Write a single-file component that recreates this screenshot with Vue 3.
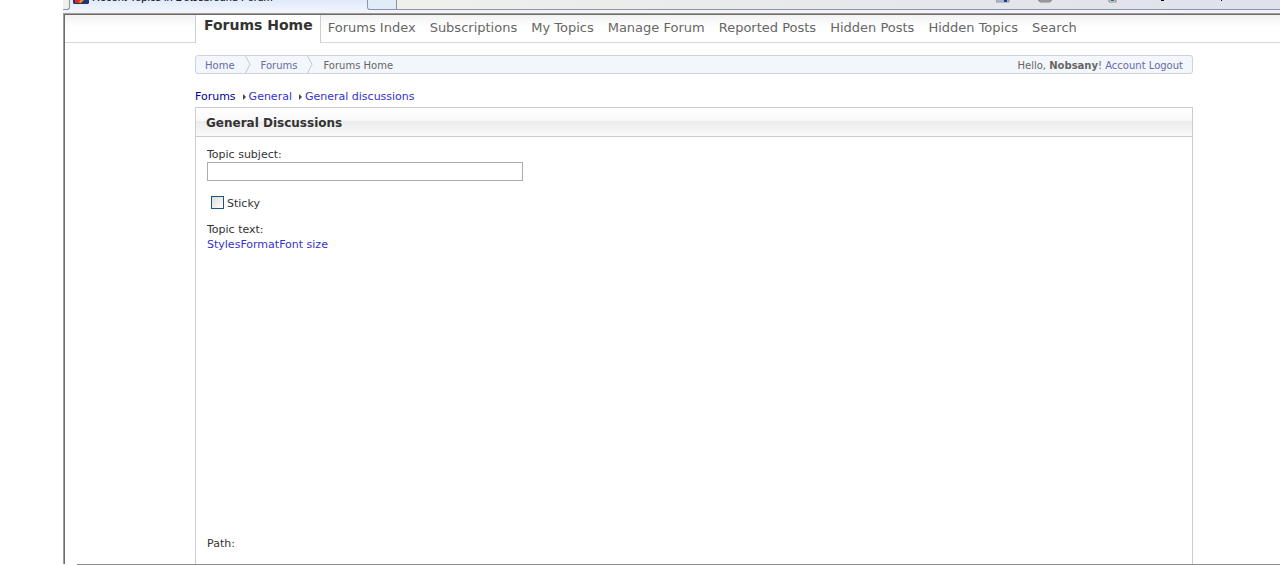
<template>
  <div class="window">
    <header class="browser-bar">
      <div class="tab-edge"></div>
      <div class="tab">
        <svg class="favicon" width="16" height="4" viewBox="0 0 16 4">
          <path d="M0 0h16v3l-1 1H1L0 3z" fill="#1d3570" />
          <path d="M2 0h7L6 3H2z" fill="#e8261c" />
          <path d="M7 0h4L8 3H6z" fill="#f08a24" />
        </svg>
        <span class="tab-title">Recent Topics in DotJsbround Forum</span>
      </div>
      <div class="new-tab"></div>
      <div class="toolbar">
        <svg width="240" height="4" viewBox="0 0 240 4">
          <path d="M0 0h13v2H0z" fill="#c7d3e6" stroke="#8592a8" />
          <path d="M8 0h3v2H8z" fill="#143c90" />
          <path d="M42 0h14l-2 2H44z" fill="#aaa" stroke="#888" />
          <path d="M113 0h7v2h-7z" fill="#fff" stroke="#888" />
          <path d="M115 0h3v1h-3z" fill="#18707a" />
          <path d="M165 0h3v1h-3zM225 0h1v1h-1z" fill="#000" />
        </svg>
      </div>
    </header>

    <div class="frame">
      <main class="page">
        <nav class="main-nav">
          <a
            v-for="item in navItems"
            :key="item"
            href="#"
            class="nav-link"
            :class="{ active: item === current }"
            @click.prevent="current = item"
            >{{ item }}</a
          >
        </nav>

        <div class="content">
          <div class="breadcrumb">
            <div class="crumbs">
              <template v-for="crumb in crumbs" :key="crumb">
                <a href="#" class="crumb">{{ crumb }}</a>
                <svg class="chevron" width="6" height="17" viewBox="0 0 6 17">
                  <path d="M0.5 0L5 8.5L0.5 17" fill="none" stroke="#c3cad0" />
                </svg>
              </template>
              <span class="crumb">Forums Home</span>
            </div>
            <div class="user">
              Hello, <b>Nobsany</b>! <a href="#">Account</a> <a href="#">Logout</a>
            </div>
          </div>

          <div class="forum-path">
            <a href="#" class="root">Forums</a>
            <svg class="arrow" width="3" height="6" viewBox="0 0 3 6"><path d="M0 0l3 3l-3 3z" /></svg>
            <a href="#">General</a>
            <svg class="arrow" width="3" height="6" viewBox="0 0 3 6"><path d="M0 0l3 3l-3 3z" /></svg>
            <a href="#">General discussions</a>
          </div>

          <section class="panel">
            <h2>General Discussions</h2>
            <form class="topic-form" @submit.prevent>
              <label for="subject" class="subject-label">Topic subject:</label>
              <input id="subject" v-model="subject" type="text" class="subject" />
              <div class="sticky-row">
                <input id="sticky" v-model="sticky" type="checkbox" />
                <label for="sticky">Sticky</label>
              </div>
              <div>Topic text:</div>
              <div class="editor">
                <a href="#">Styles</a><a href="#">Format</a><a href="#">Font size</a>
              </div>
              <div class="path">Path:</div>
            </form>
          </section>
        </div>
      </main>
    </div>
    <div class="bottom-edge"></div>
  </div>
</template>

<script setup>
import { ref } from "vue";

const navItems = [
  'Forums Home',
  'Forums Index',
  'Subscriptions',
  'My Topics',
  'Manage Forum',
  'Reported Posts',
  'Hidden Posts',
  'Hidden Topics',
  'Search'
]
const crumbs = ['Home', 'Forums']

const current = ref('Forums Home')
const subject = ref('')
const sticky = ref(false)
</script>

<style>
body {
  background: #fff;
}
</style>

<style scoped>
.window {
  display: flex;
  flex-direction: column;
  height: 100vh;
  box-sizing: border-box;
  padding-left: 63px;
  overflow: hidden;
  font-family: Verdana, "DejaVu Sans", sans-serif;
  font-size: 11px;
  line-height: 15px;
  color: #333;
}

a {
  color: #3333cc;
  text-decoration: none;
}

.browser-bar {
  display: flex;
  flex: none;
  height: 13px;
  background: #f0f3fb;
}

.browser-bar > * {
  box-sizing: border-box;
  height: 10px;
}

.tab-edge {
  width: 7px;
  border: 1px solid #8d93a8;
  border-width: 0 1px 1px 0;
  border-radius: 0 0 3px 0;
  background: #f0f0eb;
}

.tab {
  display: flex;
  align-items: flex-start;
  width: 297px;
  padding-left: 3px;
  background: linear-gradient(#dfeafa, #f0f3fb);
}

.favicon {
  flex: none;
}

.tab-title {
  margin: -10px 0 0 3px;
  font-family: Tahoma, "Liberation Sans", sans-serif;
  font-size: 11px;
  line-height: 14px;
  color: #000;
  white-space: nowrap;
}

.new-tab {
  width: 30px;
  border: 1px solid #8d93a8;
  border-top: none;
  border-radius: 0 0 0 3px;
  background: #e0ecf8;
}

.toolbar {
  display: flex;
  flex: 1;
  justify-content: flex-end;
  padding-right: 44px;
  border-bottom: 1px solid #8d93a8;
  background: linear-gradient(to right, #f0f0eb, #dfe1eb);
}

.frame {
  display: flex;
  flex: 1;
  min-height: 0;
  border-top: 1px solid #9d9d9a;
  border-left: 1px solid #9d9d9a;
}

.page {
  display: flex;
  flex: 1;
  flex-direction: column;
  min-width: 0;
  border-top: 1px solid #716b63;
  border-left: 1px solid #716b63;
}

.main-nav {
  display: flex;
  flex: none;
  height: 28px;
  box-sizing: border-box;
  padding-left: 130px;
  border-bottom: 1px solid #d9d9d9;
  background: linear-gradient(#f2f2f2, #fff 12px);
}

.nav-link {
  padding: 4px 7px;
  font-size: 13px;
  line-height: 18px;
  color: #666;
  white-space: nowrap;
}

.nav-link.active {
  height: 28px;
  box-sizing: border-box;
  padding: 1px 7px 1px 8px;
  border: solid #ccc;
  border-width: 0 1px;
  background: #fff;
  font-size: 14px;
  font-weight: bold;
  color: #333;
}

.content {
  display: flex;
  flex: 1;
  flex-direction: column;
  min-height: 0;
  margin: 12px 87px 0 130px;
}

.breadcrumb {
  display: flex;
  flex: none;
  justify-content: space-between;
  height: 17px;
  padding: 0 9px;
  border: 1px solid #cdd3da;
  border-radius: 3px;
  background: #f3f6fa;
  font-size: 10px;
  line-height: 17px;
  color: #666;
}

.breadcrumb a {
  color: #6a6aa8;
}

.crumbs {
  display: flex;
}

.crumb,
.user {
  padding-top: 1px;
}

.chevron {
  margin: 0 10px;
}

.forum-path {
  display: flex;
  align-items: center;
  margin: 15px 0 3px;
}

.forum-path .root {
  color: #000099;
}

.arrow {
  margin: 0 3px 0 7px;
  fill: #444;
}

.panel {
  flex: 1;
  min-height: 0;
  border: 1px solid #ccc;
  border-bottom: none;
}

.panel h2 {
  height: 28px;
  margin: 0;
  padding: 0 10px;
  border-bottom: 1px solid #ccc;
  background: linear-gradient(#fff, #f8f8f8 13px, #ececec 13px, #f9f9f9);
  font-size: 12px;
  line-height: 30px;
}

.topic-form {
  display: flex;
  flex-direction: column;
  align-items: flex-start;
  padding: 11px 11px 0;
}

.subject-label {
  line-height: 14px;
}

.subject {
  width: 316px;
  max-width: 100%;
  height: 19px;
  box-sizing: border-box;
  border: 1px solid #a5acb2;
  background: #fff;
}

.sticky-row {
  display: flex;
  align-items: flex-start;
  gap: 3px;
  margin: 15px 0 11px 4px;
}

.sticky-row input {
  appearance: none;
  width: 13px;
  height: 13px;
  margin: 0;
  border: 1px solid #1d5281;
  background: linear-gradient(135deg, #dcdcd7, #fff);
}

.sticky-row input:checked {
  background: #1d5281;
}

.editor {
  height: 299px;
}

.bottom-edge {
  flex: none;
  height: 1px;
  margin-left: 14px;
  background: #8c8c8c;
}
</style>
